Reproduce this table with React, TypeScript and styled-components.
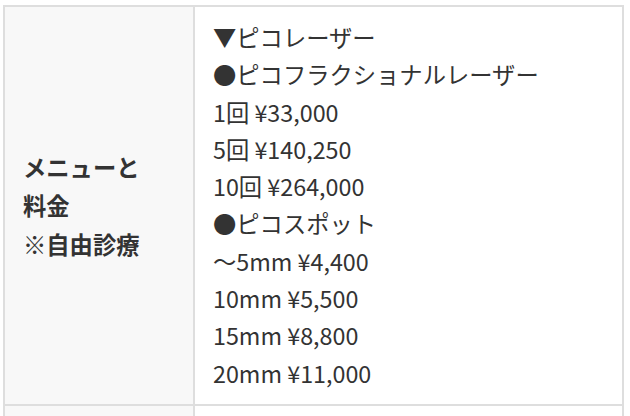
import styled, { createGlobalStyle } from "styled-components";

const GlobalStyle = createGlobalStyle`
  html, body {
    margin: 0;
    padding: 0;
    background: #ffffff;
    overflow: hidden;
  }
`;

const priceLines = [
  "▼ピコレーザー",
  "●ピコフラクショナルレーザー",
  "1回 ¥33,000",
  "5回 ¥140,250",
  "10回 ¥264,000",
  "●ピコスポット",
  "〜5mm ¥4,400",
  "10mm ¥5,500",
  "15mm ¥8,800",
  "20mm ¥11,000",
];

const App = () => {
  return (
    <Wrapper>
      <GlobalStyle />
      <Table>
        <tbody>
          <tr>
            <Head>
              メニューと
              <br />
              料金
              <br />
              ※自由診療
            </Head>
            <Cell>
              {priceLines.map((line) => (
                <Line key={line}>{line}</Line>
              ))}
            </Cell>
          </tr>
          <tr>
            <Head>&nbsp;</Head>
            <Cell>&nbsp;</Cell>
          </tr>
        </tbody>
      </Table>
    </Wrapper>
  );
};

const Wrapper = styled.div`
  padding: 5px 6px 0 3px;
  font-family: "Noto Sans CJK JP", "Noto Sans", sans-serif;
  color: #333333;
`;

const Table = styled.table`
  width: 621px;
  border-collapse: collapse;
  table-layout: fixed;
`;

const Head = styled.th`
  box-sizing: border-box;
  width: 190px;
  padding: 12px 18px;
  background-color: #f8f8f8;
  border: 2px solid #dedede;
  text-align: left;
  vertical-align: middle;
  font-size: 23.3px;
  font-weight: 700;
  line-height: 38.5px;
`;

const Cell = styled.td`
  padding: 12px 18px;
  background-color: #ffffff;
  border: 2px solid #dedede;
  vertical-align: top;
  font-size: 23.3px;
  line-height: 37.3px;
`;

const Line = styled.div`
  white-space: nowrap;
`;

export default App;
